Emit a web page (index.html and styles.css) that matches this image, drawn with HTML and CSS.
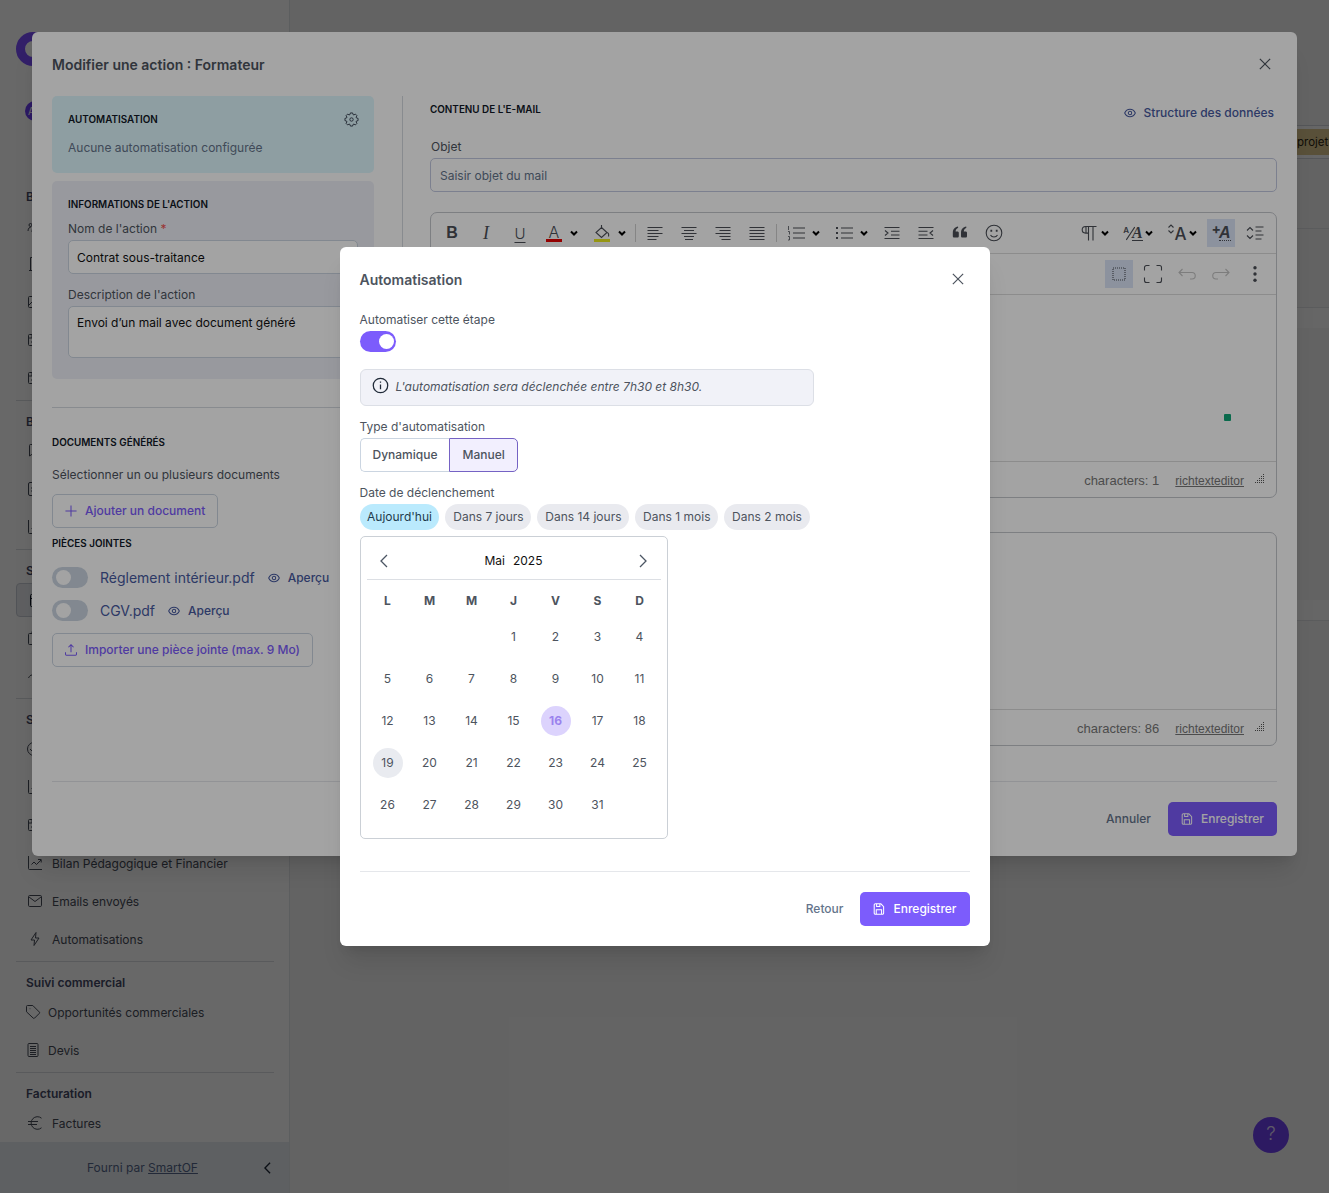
FILE: index.html
```html
<!DOCTYPE html>
<html lang="fr">
<head>
    <meta charset="UTF-8">
    <meta name="viewport" content="width=device-width, initial-scale=1.0">
    <title>Modifier une action</title>
    <link rel="stylesheet" href="styles.css">
</head>
<body>
    <!-- Shared icons -->
    <svg class="sprite" width="0" height="0">
        <symbol id="i-close" viewBox="0 0 14 14"><path d="M1 1l12 12M13 1L1 13"/></symbol>
        <symbol id="i-eye" viewBox="0 0 14 14"><path d="M.8 7c1.200-2.800 3.500-4.400 6.200-4.400s5 1.600 6.200 4.400c-1.200 2.800-3.500 4.400-6.200 4.400S2 9.800.8 7z"/><circle cx="7" cy="7" r="2"/></symbol>
        <symbol id="i-save" viewBox="0 0 14 14"><path d="M2.800 1h6.400l3.200 3.200v7.400a1.400 1.400 0 0 1-1.400 1.400H2.800a1.400 1.400 0 0 1-1.400-1.400V2.400A1.400 1.400 0 0 1 2.800 1zM3.800 12.800V8h6.200v4.800M4.200 1v3.200H8V1"/></symbol>
        <symbol id="i-gear" viewBox="0 0 16 16"><path d="M6.800 1.500h2.400l.4 1.700 1 .4 1.500-.9 1.700 1.700-.9 1.500.4 1 1.700.4v2.400l-1.700.4-.4 1 .9 1.500-1.700 1.700-1.500-.9-1 .4-.4 1.700h-2.400l-.4-1.700-1-.4-1.500.9-1.700-1.700.9-1.500-.4-1-1.700-.4v-2.400l1.700-.4.4-1-.9-1.500 1.700-1.700 1.500.9 1-.4z" transform="translate(0 -.5)"/><circle cx="8" cy="8" r="1.800"/></symbol>
        <symbol id="i-caret" viewBox="0 0 8 8"><path d="M1 2.500l3 3 3-3"/></symbol>
        <symbol id="i-left" viewBox="0 0 8 14"><path d="M7 1L1 7l6 6"/></symbol>
        <symbol id="i-right" viewBox="0 0 8 14"><path d="M1 1l6 6-6 6"/></symbol>
        <symbol id="i-chart" viewBox="0 0 16 16"><path d="M1.500 1v12.500a1 1 0 0 0 1 1h12.500M4.500 9.500l2.500-2.500 2.500 2.500 4.500-4.500M11 4.500h3.200v3"/></symbol>
        <symbol id="i-card" viewBox="0 0 16 16"><rect x="1.500" y="2.500" width="13" height="11" rx="1"/><path d="M1.500 6h13M5 3v3M4 10h4"/></symbol>
        <symbol id="i-doc" viewBox="0 0 16 16"><rect x="3.500" y="1.500" width="10" height="13" rx="1.500"/><path d="M6 5h5M6 8h5"/></symbol>
        <symbol id="i-grip" viewBox="0 0 10 10"><path d="M9.500 0v10M7.500 2v8M5.500 4v6M3.500 6v4M1.500 8v2" stroke-dasharray="1 1"/></symbol>
    </svg>

    <div class="app">
        <aside class="sidebar">
            <div class="brand"><div class="brand-logo"></div></div>
            <div class="account">A</div>
            <nav>
                <div class="nav-item nav-item-home"><svg class="icon"><use href="#i-doc"/></svg></div>
                <section class="nav-section">
                    <h2>B</h2>
                    <div class="nav-item"><svg class="icon" viewBox="0 0 16 16"><circle cx="8" cy="5" r="2.500"/><circle cx="3.500" cy="7" r="1.500"/><path d="M1 13c0-3 2-4 3-4M5 14c0-3 1-5 3-5s3 2 3 5"/></svg></div>
                    <div class="nav-item"><svg class="icon" viewBox="0 0 16 16"><path d="M2 14.500h12M3.500 14V1.500h9V14M6 5h1M6 8h1"/></svg></div>
                    <div class="nav-item"><svg class="icon" viewBox="0 0 16 16"><rect x="1.500" y="2.500" width="13" height="11" rx="1"/><path d="M2 11l4-4 3 3"/></svg></div>
                    <div class="nav-item"><svg class="icon"><use href="#i-card"/></svg></div>
                    <div class="nav-item"><svg class="icon"><use href="#i-card"/></svg></div>
                </section>
                <section class="nav-section">
                    <h2>B</h2>
                    <div class="nav-item"><svg class="icon" viewBox="0 0 16 16"><path d="M14 1.500H3.500a1 1 0 0 0-1 1V13l3-2H14z"/></svg></div>
                    <div class="nav-item"><svg class="icon" viewBox="0 0 16 16"><rect x="1.500" y="1.500" width="13" height="13" rx="1.500"/><path d="M4 7h3M4 10h3"/></svg></div>
                    <div class="nav-item"><svg class="icon"><use href="#i-chart"/></svg></div>
                </section>
                <section class="nav-section">
                    <h2>S</h2>
                    <div class="nav-item active"><svg class="icon" viewBox="0 0 16 16"><rect x="2.500" y="2.500" width="12" height="12" rx="1"/><path d="M2.500 6.500h12M5.500 1v3"/></svg></div>
                    <div class="nav-item"><svg class="icon" viewBox="0 0 16 16"><rect x="1.500" y="3.500" width="13" height="11" rx="1"/><path d="M5 3V1.500h6V3"/></svg></div>
                    <div class="nav-item"><svg class="icon" viewBox="0 0 16 16"><path d="M1.500 10c1-2 2-3 3.500-3s2 1 2 3"/></svg></div>
                </section>
                <section class="nav-section">
                    <h2>S</h2>
                    <div class="nav-item"><svg class="icon" viewBox="0 0 16 16"><circle cx="7" cy="8" r="6.500"/><path d="M3 8l3 3 4-5"/></svg></div>
                    <div class="nav-item"><svg class="icon"><use href="#i-chart"/></svg></div>
                    <div class="nav-item"><svg class="icon"><use href="#i-card"/></svg></div>
                    <div class="nav-item"><svg class="icon"><use href="#i-chart"/></svg>Bilan Pédagogique et Financier</div>
                    <div class="nav-item"><svg class="icon" viewBox="0 0 16 16"><rect x="1.500" y="2.500" width="13" height="11" rx="1.200"/><path d="M2 4l6 4.500L14 4"/></svg>Emails envoyés</div>
                    <div class="nav-item"><svg class="icon" viewBox="0 0 16 16"><path d="M9 1.500L4 9h3.500L7 14.500 12 7H8.500z"/></svg>Automatisations</div>
                </section>
                <section class="nav-section compact">
                    <h2>Suivi commercial</h2>
                    <div class="nav-item"><svg class="icon" viewBox="0 0 16 16"><path d="M1.500 2.500a1 1 0 0 1 1-1h5.300l6.500 6.500a1 1 0 0 1 0 1.400l-4.700 4.700a1 1 0 0 1-1.400 0L1.500 7.800z"/><path d="M4.700 4.700h.6"/></svg>Opportunités commerciales</div>
                    <div class="nav-item"><svg class="icon" viewBox="0 0 16 16"><rect x="3" y="1.500" width="10" height="13" rx="1"/><path d="M5 4.500h6M5 6.500h6M5 8.500h6M5 10.500h6M5 12.500h6"/></svg>Devis</div>
                </section>
                <section class="nav-section">
                    <h2>Facturation</h2>
                    <div class="nav-item"><svg class="icon" viewBox="0 0 16 16"><path d="M14.500 3.200A6.300 6.300 0 1 0 14.500 12.800M1 6.500h10M1 9.500h9"/></svg>Factures</div>
                </section>
            </nav>
            <footer class="sidebar-footer">
                <span>Fourni par <a>SmartOF</a></span>
                <svg class="collapse"><use href="#i-left"/></svg>
            </footer>
        </aside>
        <main class="content">
            <div class="tag-bar"><span class="tag">projet</span></div>
            <div class="band band-a"></div>
            <div class="band band-b"></div>
            <div class="band band-c"></div>
            <div class="band band-d"></div>
            <div class="band band-e"></div>
        </main>
        <button class="help">?</button>
    </div>

    <!-- Action dialog -->
    <div class="overlay overlay-top">
        <div class="dialog action-dialog">
            <header class="dialog-header">
                <h1>Modifier une action : Formateur</h1>
                <svg class="close"><use href="#i-close"/></svg>
            </header>
            <div class="action-body">
                <div class="action-side">
                    <div class="card card-auto">
                        <div class="card-head">
                            <h3>Automatisation</h3>
                            <svg class="gear"><use href="#i-gear"/></svg>
                        </div>
                        <p>Aucune automatisation configurée</p>
                    </div>
                    <div class="card card-info">
                        <h3>Informations de l'action</h3>
                        <label>Nom de l'action <span class="required">*</span></label>
                        <div class="input">Contrat sous-traitance</div>
                        <label>Description de l'action</label>
                        <div class="input textarea">Envoi d’un mail avec document généré</div>
                    </div>
                    <div class="documents">
                        <h3>Documents générés</h3>
                        <p>Sélectionner un ou plusieurs documents</p>
                        <button class="btn btn-outline"><svg class="btn-icon" viewBox="0 0 14 14"><path d="M7 .5v13M.5 7h13"/></svg>Ajouter un document</button>
                        <h3 class="attachments-title">Pièces jointes</h3>
                        <div class="attachment">
                            <span class="switch"></span>
                            <a class="file">Réglement intérieur.pdf</a>
                            <a class="preview"><svg class="btn-icon"><use href="#i-eye"/></svg>Aperçu</a>
                        </div>
                        <div class="attachment">
                            <span class="switch"></span>
                            <a class="file">CGV.pdf</a>
                            <a class="preview"><svg class="btn-icon"><use href="#i-eye"/></svg>Aperçu</a>
                        </div>
                        <button class="btn btn-outline"><svg class="btn-icon" viewBox="0 0 14 14"><path d="M7 9.500V.8M4 3.800l3-3 3 3M.6 9.500v2.600a1 1 0 0 0 1 1h10.800a1 1 0 0 0 1-1v-2.600"/></svg>Importer une pièce jointe (max. 9 Mo)</button>
                    </div>
                </div>
                <div class="action-mail">
                    <div class="mail-head">
                        <h3>Contenu de l'e-mail</h3>
                        <a class="preview"><svg class="btn-icon"><use href="#i-eye"/></svg>Structure des données</a>
                    </div>
                    <label>Objet</label>
                    <div class="input placeholder">Saisir objet du mail</div>

                    <div class="editor editor-main">
                        <div class="toolbar">
                            <span class="tool tool-bold">B</span>
                            <span class="tool tool-italic">I</span>
                            <span class="tool tool-underline">U</span>
                            <span class="tool tool-menu"><i class="glyph glyph-color">A</i><svg class="caret"><use href="#i-caret"/></svg></span>
                            <span class="tool tool-menu"><i class="glyph glyph-fill"><svg viewBox="0 0 16 14"><path d="M7.500 2.500l5.500 5-5.500 5-5.500-5zM7.500 0v4M13 7.500c1.500 0 2 2 1.500 4"/></svg></i><svg class="caret"><use href="#i-caret"/></svg></span>
                            <span class="tool-sep"></span>
                            <span class="tool"><svg viewBox="0 0 16 16"><path d="M.5 2.500h15M.5 5.500h11M.5 8.500h15M.5 11.500h11M.5 14.500h9"/></svg></span>
                            <span class="tool"><svg viewBox="0 0 16 16"><path d="M.5 2.500h15M3 5.500h10M.5 8.500h15M3 11.500h10M4 14.500h8"/></svg></span>
                            <span class="tool"><svg viewBox="0 0 16 16"><path d="M.5 2.500h15M4.500 5.500h11M.5 8.500h15M4.500 11.500h11M6.500 14.500h9"/></svg></span>
                            <span class="tool"><svg viewBox="0 0 16 16"><path d="M.5 2.500h15M.5 5.500h15M.5 8.500h15M.5 11.500h15M.5 14.500h15"/></svg></span>
                            <span class="tool-sep"></span>
                            <span class="tool tool-menu"><i class="glyph"><svg class="wide" viewBox="0 0 18 16"><path d="M6 3h12M6 8h12M6 13h12"/><path d="M1.500 1v4M1 6.500h1.500v3M1 11.500h1.500v3.500H1" stroke-width=".8"/></svg></i><svg class="caret"><use href="#i-caret"/></svg></span>
                            <span class="tool tool-menu"><i class="glyph"><svg class="wide" viewBox="0 0 18 16"><path d="M6 3h12M6 8h12M6 13h12"/><path d="M1 3h2M1 8h2M1 13h2" stroke-width="2"/></svg></i><svg class="caret"><use href="#i-caret"/></svg></span>
                            <span class="tool"><svg viewBox="0 0 16 16"><path d="M.5 2.500h15M7 6.200h8.500M7 10h8.500M.5 13.500h15M1 5.500l3 2.500-3 2.500"/></svg></span>
                            <span class="tool"><svg viewBox="0 0 16 16"><path d="M.5 2.500h15M.5 6.200h9M.5 10h9M.5 13.500h15M15 5.500l-3 2.500 3 2.500"/></svg></span>
                            <span class="tool"><svg class="filled" viewBox="0 0 16 16"><path d="M6 1.500C3 2 .8 4 .8 8v3c0 1 .5 1.500 1.500 1.500h3c1 0 1.500-.5 1.500-1.500V8c0-1-.5-1.500-1.500-1.500H3.600C3.700 4.800 4.500 3.500 6.200 2.800zM14.200 1.500C11.200 2 9 4 9 8v3c0 1 .5 1.500 1.500 1.500h3c1 0 1.500-.5 1.500-1.500V8c0-1-.5-1.500-1.500-1.500h-1.700c.1-1.700.9-3 2.600-3.700z"/></svg></span>
                            <span class="tool"><svg class="smile" viewBox="0 0 18 18"><circle cx="9" cy="9" r="7.800"/><path d="M5.500 11c1.500 2.600 5.500 2.600 7 0"/><path d="M6.300 5.800v2M11.700 5.800v2" stroke-width="1.800"/></svg></span>
                            <span class="tool-spacer"></span>
                            <span class="tool tool-menu tool-narrow"><i class="glyph"><svg viewBox="0 0 16 16"><path d="M15.500 1.500H4.500a3.300 3.300 0 0 0 0 6.600H7M5 1.500v6.600M7.500 1.500v14M12 1.500v14"/></svg></i><svg class="caret"><use href="#i-caret"/></svg></span>
                            <span class="tool tool-menu tool-narrow"><i class="glyph glyph-styles"><sup>A</sup><svg viewBox="0 0 8 14"><path d="M0 13L8 1"/></svg><b>A</b></i><svg class="caret"><use href="#i-caret"/></svg></span>
                            <span class="tool tool-menu tool-narrow"><i class="glyph glyph-size"><svg viewBox="0 0 8 10"><path d="M1.500 3.500L4 1l2.500 2.500M1.500 6.500L4 9l2.500-2.500"/></svg>A</i><svg class="caret"><use href="#i-caret"/></svg></span>
                            <span class="tool tool-active glyph-add"><sup>+</sup><b>A</b></span>
                            <span class="tool"><svg class="wide" viewBox="0 0 18 16"><path d="M1 5.500l3-3 3 3M1 10.500l3 3 3-3M9.500 2h8M9.500 6h6M9.500 10h8M9.500 14h6"/></svg></span>
                        </div>
                        <div class="toolbar toolbar-end">
                            <span class="tool tool-active"><svg viewBox="0 0 16 16"><rect x="2" y="2" width="12" height="12" stroke-dasharray="1 1"/></svg></span>
                            <span class="tool"><svg class="large" viewBox="0 0 20 20"><path d="M1.500 6.500v-3a2 2 0 0 1 2-2h3M13.500 1.500h3a2 2 0 0 1 2 2v3M18.500 13.500v3a2 2 0 0 1-2 2h-3M6.500 18.500h-3a2 2 0 0 1-2-2v-3"/></svg></span>
                            <span class="tool tool-disabled"><svg class="wide" viewBox="0 0 18 16"><path d="M4.500 3L1 6.500 4.500 10M1 6.500h13a2.800 2.800 0 0 1 0 6.500h-2"/></svg></span>
                            <span class="tool tool-disabled"><svg class="wide" viewBox="0 0 18 16"><path d="M13.500 3L17 6.500 13.500 10M17 6.500H4a2.800 2.800 0 0 0 0 6.500h2"/></svg></span>
                            <span class="tool"><svg class="filled" viewBox="0 0 16 16"><circle cx="8" cy="1.800" r="1.700"/><circle cx="8" cy="8" r="1.700"/><circle cx="8" cy="14.200" r="1.700"/></svg></span>
                        </div>
                        <div class="editor-body"><span class="marker"></span></div>
                        <div class="editor-footer"><span>characters: 1</span><a>richtexteditor</a><svg class="grip"><use href="#i-grip"/></svg></div>
                    </div>

                    <div class="editor editor-second">
                        <div class="editor-body"></div>
                        <div class="editor-footer"><span>characters: 86</span><a>richtexteditor</a><svg class="grip"><use href="#i-grip"/></svg></div>
                    </div>
                </div>
            </div>
            <footer class="dialog-footer">
                <button class="btn btn-text">Annuler</button>
                <button class="btn btn-primary"><svg class="btn-icon"><use href="#i-save"/></svg>Enregistrer</button>
            </footer>
        </div>
    </div>

    <!-- Automation dialog -->
    <div class="overlay">
        <div class="dialog auto-dialog">
            <header class="dialog-header">
                <h1>Automatisation</h1>
                <svg class="close"><use href="#i-close"/></svg>
            </header>
            <div class="auto-body">
                <label>Automatiser cette étape</label>
                <span class="switch on"></span>
                <div class="notice">
                    <svg viewBox="0 0 16 16"><circle cx="8" cy="8" r="6.800"/><path d="M8 7v4.500M8 4.200v1.300"/></svg>
                    <em>L'automatisation sera déclenchée entre 7h30 et 8h30.</em>
                </div>
                <label>Type d'automatisation</label>
                <div class="select-button">
                    <button>Dynamique</button>
                    <button class="selected">Manuel</button>
                </div>
                <label>Date de déclenchement</label>
                <div class="chips">
                    <span class="chip selected">Aujourd'hui</span>
                    <span class="chip">Dans 7 jours</span>
                    <span class="chip">Dans 14 jours</span>
                    <span class="chip">Dans 1 mois</span>
                    <span class="chip">Dans 2 mois</span>
                </div>
                <div class="calendar">
                    <div class="calendar-header">
                        <svg><use href="#i-left"/></svg>
                        <div class="calendar-title"><span>Mai</span><span>2025</span></div>
                        <svg><use href="#i-right"/></svg>
                    </div>
                    <div class="weekdays"><b>L</b><b>M</b><b>M</b><b>J</b><b>V</b><b>S</b><b>D</b></div>
                    <div class="days">
                        <span class="first">1</span><span>2</span><span>3</span><span>4</span>
                        <span>5</span><span>6</span><span>7</span><span>8</span><span>9</span><span>10</span><span>11</span>
                        <span>12</span><span>13</span><span>14</span><span>15</span><span class="picked">16</span><span>17</span><span>18</span>
                        <span class="today">19</span><span>20</span><span>21</span><span>22</span><span>23</span><span>24</span><span>25</span>
                        <span>26</span><span>27</span><span>28</span><span>29</span><span>30</span><span>31</span>
                    </div>
                </div>
            </div>
            <footer class="dialog-footer">
                <button class="btn btn-text">Retour</button>
                <button class="btn btn-primary"><svg class="btn-icon"><use href="#i-save"/></svg>Enregistrer</button>
            </footer>
        </div>
    </div>
</body>
</html>
```

FILE: styles.css
```css
* {
    box-sizing: border-box;
}

body {
    margin: 0;
    height: 1193px;
    overflow: hidden;
    font-family: Inter, "Liberation Sans", sans-serif;
    font-size: 12px;
    color: #4d545e;
}

h1, h2, h3, p {
    margin: 0;
}

button {
    font: inherit;
    color: inherit;
}

svg {
    display: block;
    flex: none;
    fill: none;
    stroke: currentColor;
}

.sprite {
    position: absolute;
}

/* Application behind the dialogs */
.app {
    display: flex;
    height: 1193px;
    background-color: #f5f5f5;
}

.sidebar {
    display: flex;
    flex-direction: column;
    width: 290px;
    height: 1193px;
    background-color: #fff;
    border-right: 1px solid #e3e6ea;
}

.brand {
    padding: 32px 16px 0;
}

.brand-logo {
    width: 34px;
    height: 34px;
    border: 9px solid #7c4dff;
    border-radius: 50%;
}

.account {
    display: flex;
    align-items: center;
    width: 20px;
    height: 20px;
    margin: 35px 0 0 25px;
    padding-left: 3px;
    border-radius: 50%;
    background-color: #6d3df5;
    color: #fff;
    font-size: 10px;
}

nav {
    flex: 1;
    padding: 7px 15px 0 16px;
    overflow: hidden;
}

.nav-section {
    padding: 9px 0 3px;
    border-bottom: 1px solid #dadde2;
}

.nav-section h2 {
    height: 22px;
    padding-left: 10px;
    line-height: 23px;
    font-size: 12px;
    font-weight: 600;
    color: #444864;
}

.nav-item {
    display: flex;
    align-items: center;
    gap: 9px;
    height: 38px;
    padding-left: 11px;
    color: #464c58;
    white-space: nowrap;
}

.nav-item-home {
    padding-left: 13px;
    margin-bottom: 10px;
}

.nav-item.active {
    height: 34px;
    margin: 2px 0;
    border: 1px solid #c9ced6;
    border-radius: 4px;
    background-color: #e9ebf0;
    color: #111827;
}

.compact .nav-item {
    gap: 7px;
    padding-left: 9px;
}

.icon {
    width: 16px;
    height: 16px;
}

.sidebar-footer {
    display: flex;
    align-items: center;
    justify-content: space-between;
    height: 51px;
    padding: 0 18px 0 87px;
    background-color: #e6ecf0;
    color: #55678a;
}

.sidebar-footer a {
    text-decoration: underline;
}

.collapse {
    width: 7px;
    height: 12px;
    stroke-width: 1.6;
    color: #1f2937;
}

.content {
    flex: 1;
    padding-top: 125px;
}

.tag-bar {
    display: flex;
    justify-content: flex-end;
    height: 34px;
    padding: 3px 0;
    border-top: 1px solid #d0d4d9;
    border-bottom: 1px solid #d0d4d9;
    background-color: #fafafa;
}

.tag {
    width: 44px;
    padding-left: 12px;
    line-height: 26px;
    font-size: 11.5px;
    background-color: #dcc68e;
    color: #2b2410;
}

.band {
    border-bottom: 1px solid #e0e2e5;
}

.band-a {
    height: 70px;
}

.band-b {
    height: 79px;
}

.band-c {
    height: 20px;
    border: 0;
    background-color: #fafafa;
}

.band-d {
    height: 272px;
    border: 0;
}

.band-e {
    height: 21px;
    background-color: #fafafa;
}

.help {
    position: absolute;
    right: 40px;
    bottom: 40px;
    width: 36px;
    height: 36px;
    padding: 0 0 4px;
    border: 0;
    border-radius: 50%;
    background-color: #7040f0;
    color: #e4dcff;
    font-size: 19px;
    font-weight: 300;
}

/* Dialogs */
.overlay {
    position: absolute;
    inset: 0;
    display: flex;
    align-items: center;
    justify-content: center;
    background-color: rgba(0, 0, 0, 0.36);
}

.overlay-top {
    align-items: flex-start;
    padding-top: 32px;
}

.dialog {
    display: flex;
    flex-direction: column;
    padding: 20px;
    border-radius: 6px;
    background-color: #fff;
    box-shadow: 0 20px 25px -5px rgba(0, 0, 0, 0.1), 0 8px 10px -6px rgba(0, 0, 0, 0.1);
}

.dialog-header {
    display: flex;
    align-items: flex-start;
    justify-content: space-between;
    height: 44px;
}

.dialog-header h1 {
    line-height: 26px;
    font-size: 14px;
    font-weight: 600;
}

.close {
    width: 12px;
    height: 12px;
    margin: 6px 6px 0 0;
    stroke-width: 1.4;
}

.dialog-footer {
    display: flex;
    justify-content: flex-end;
    gap: 4px;
    padding-top: 20px;
    border-top: 1px solid #e5e7eb;
}

.btn {
    display: inline-flex;
    align-items: center;
    gap: 8px;
    height: 34px;
    padding: 0 12px 1px;
    border: 1px solid transparent;
    border-radius: 5px;
    background: none;
    font-weight: 500;
    white-space: nowrap;
}

.btn-icon {
    width: 12px;
    height: 12px;
    stroke-width: 1.2;
}

.btn-primary {
    background-color: #7c5cfc;
    color: #fff;
}

.btn-text {
    color: #64748b;
}

.btn-outline {
    border-color: #cbd5e1;
    color: #7c5cfc;
}

label {
    display: block;
    height: 16px;
    line-height: 16px;
}

.switch {
    display: block;
    flex: none;
    width: 36px;
    height: 21px;
    padding: 3px;
    border-radius: 11px;
    background-color: #cbd5e1;
}

.switch::before {
    content: "";
    display: block;
    width: 15px;
    height: 15px;
    margin-left: 1px;
    border-radius: 50%;
    background-color: #fff;
}

.switch.on {
    background-color: #7c5cfc;
}

.switch.on::before {
    margin-left: 16px;
}

.input {
    height: 34px;
    padding: 0 8px;
    border: 1px solid #cbd5e1;
    border-radius: 5px;
    background-color: #fff;
    line-height: 33px;
    color: #111;
}

/* Action dialog */
.action-dialog {
    width: 1265px;
    height: 824px;
}

.action-body {
    display: flex;
    height: 685px;
}

.action-side {
    width: 351px;
    padding-right: 28px;
    border-right: 1px solid #d5d9e0;
}

h3 {
    font-size: 9.9px;
    font-weight: 600;
    line-height: 14px;
    text-transform: uppercase;
    color: #111827;
}

.card {
    padding: 16px;
    border-radius: 5px;
}

.card-auto {
    height: 77px;
    margin-bottom: 8px;
    background-color: #dff7fd;
}

.card-auto p {
    margin-top: 13px;
    line-height: 16px;
    color: #64748b;
}

.card-head {
    display: flex;
    align-items: center;
    justify-content: space-between;
    height: 15px;
}

.card-head h3 {
    padding-bottom: 1px;
}

.gear {
    width: 15px;
    height: 15px;
    margin-right: -1px;
    color: #374151;
}

.card-info {
    height: 198px;
    background-color: #eef0f7;
}

.card-info h3 {
    margin-bottom: 10px;
}

.card-info label {
    margin-bottom: 3px;
}

.card-info .input + label {
    margin-top: 13px;
}

.card-info .textarea {
    height: 52px;
    line-height: 32px;
}

.required {
    color: #f05252;
}

.documents {
    margin-top: 28px;
    padding-top: 27px;
    border-top: 1px solid #d5d9e0;
}

.documents p {
    margin: 18px 0 11px;
    line-height: 16px;
}

.documents .attachments-title {
    margin: 8px 0 17px;
}

.attachment {
    display: flex;
    align-items: center;
    height: 21px;
    margin-bottom: 12px;
}

.file {
    margin: 0 13px 0 12px;
    font-size: 14px;
    color: #475aa0;
}

.preview {
    display: flex;
    align-items: center;
    gap: 8px;
    font-weight: 500;
    color: #475aa0;
}

.action-mail {
    flex: 1;
    padding-left: 27px;
}

.mail-head {
    display: flex;
    justify-content: space-between;
    height: 43px;
    padding: 6px 3px 0 0;
}

.mail-head .preview {
    height: 21px;
}

.action-mail label {
    margin-bottom: 3px;
    padding-left: 1px;
}

.action-mail .input {
    border-color: #c3c9e0;
}

.action-mail .placeholder {
    padding-left: 9px;
    color: #64748b;
}

.editor {
    display: flex;
    flex-direction: column;
    border: 1px solid #c4c7cc;
    border-radius: 7px;
}

.editor-main {
    height: 286px;
    margin-top: 20px;
}

.editor-second {
    height: 214px;
    margin-top: 34px;
}

.toolbar {
    display: flex;
    align-items: center;
    gap: 6px;
    height: 41px;
    padding: 0 7px;
    border-bottom: 1px solid #dcdcdc;
    color: #4b4f57;
}

.toolbar-end {
    justify-content: flex-end;
}

.tool {
    display: flex;
    flex: none;
    align-items: center;
    justify-content: center;
    width: 28px;
    height: 28px;
}

.tool svg {
    width: 16px;
    height: 16px;
    stroke-width: 1.1;
}

.tool svg.filled {
    fill: currentColor;
    stroke: none;
}

.tool svg.smile,
.tool svg.wide {
    width: 18px;
}

.tool svg.smile {
    height: 18px;
}

.tool svg.large {
    width: 20px;
    height: 20px;
}

.tool-bold {
    font-family: "Liberation Sans", Arial, sans-serif;
    font-size: 16px;
    font-weight: 700;
}

.tool-italic {
    font-family: "Liberation Serif", serif;
    font-size: 18px;
    font-style: italic;
}

.tool-underline {
    font-size: 15px;
    font-weight: 300;
    text-decoration: underline;
    text-underline-offset: 3px;
}

.tool-menu {
    justify-content: flex-start;
    width: 42px;
}

.tool-narrow {
    width: 38px;
}

.tool .caret {
    width: 8px;
    height: 8px;
    margin-left: 2px;
    stroke-width: 2;
    color: #000;
}

.tool-narrow .caret {
    margin-left: -2px;
}

.glyph {
    display: flex;
    flex: none;
    align-items: center;
    justify-content: center;
    width: 28px;
    font-style: normal;
}

.glyph-color,
.glyph-fill {
    width: 16px;
    height: 18px;
    margin: 0 6px;
    border-bottom: 3px solid #e60000;
    font-size: 16px;
    font-weight: 300;
}

.glyph-fill {
    border-color: #ebeb1e;
}

.tool .glyph-fill svg {
    height: 14px;
}

.glyph-styles sup {
    align-self: flex-start;
    margin: 0 -3px 6px 0;
    font-size: 8px;
    font-weight: 600;
}

.tool .glyph-styles svg {
    width: 9px;
    height: 15px;
}

.glyph-styles b,
.glyph-add b {
    margin-left: -3px;
    font-family: "Liberation Serif", serif;
    font-size: 16px;
    font-style: italic;
    line-height: 15px;
    border-bottom: 1px solid currentColor;
}

.glyph-size {
    padding-top: 2px;
    font-size: 17px;
    font-weight: 500;
}

.tool .glyph-size svg {
    width: 8px;
    height: 10px;
    margin: 0 -1px 10px 0;
}

.glyph-add sup {
    margin: 0 1px 8px 0;
    font-size: 14px;
    font-weight: 700;
    line-height: 10px;
}

.glyph-add b {
    font-family: "Liberation Sans", Arial, sans-serif;
    border-bottom: 1px dotted currentColor;
}

.tool-sep {
    width: 1px;
    height: 18px;
    margin: 0 -1px;
    background-color: #d0d0d0;
}

.tool-spacer {
    flex: 1;
}

.tool-active {
    background-color: #dbe4f8;
}

.tool-disabled {
    color: #c4c4c4;
}

.editor-body {
    flex: 1;
}

/* Extension marker at the end of the text area */
.marker {
    display: block;
    width: 7px;
    height: 7px;
    margin: 119px 45px 0 auto;
    border-radius: 1px;
    background-color: #10a777;
}

.editor-footer {
    display: flex;
    align-items: center;
    justify-content: flex-end;
    height: 36px;
    padding: 2px 12px 0 0;
    border-top: 1px solid #dcdcdc;
    font-family: "Liberation Sans", Arial, sans-serif;
    font-size: 13px;
    color: #777;
}

.editor-footer a {
    margin: 0 10px 0 16px;
    font-size: 12px;
    text-decoration: underline;
}

.grip {
    width: 10px;
    height: 10px;
    margin-bottom: 3px;
    color: #555;
}

/* Automation dialog */
.auto-dialog {
    width: 650px;
    height: 699px;
}

.auto-body {
    height: 560px;
    padding-top: 1px;
}

.auto-body .switch {
    margin: 3px 0 17px;
}

.notice {
    display: flex;
    gap: 8px;
    width: 454px;
    height: 37px;
    margin-bottom: 13px;
    padding: 7px 11px;
    border: 1px solid #dcdfe6;
    border-radius: 6px;
    background-color: #f1f2f8;
    line-height: 20px;
}

.notice svg {
    width: 17px;
    height: 17px;
    margin-right: -1px;
    stroke-width: 1.2;
    color: #1f2937;
}

.select-button {
    display: flex;
    margin: 3px 0 13px;
}

.select-button button {
    height: 34px;
    padding: 0 12px 1px;
    border: 1px solid #cbd5e1;
    border-right: 0;
    border-radius: 5px 0 0 5px;
    background-color: #fff;
    font-weight: 500;
}

.select-button .selected {
    border: 1px solid #7562c4;
    border-radius: 0 5px 5px 0;
    background-color: #f2effe;
}

.chips {
    display: flex;
    gap: 6px;
    margin: 3px 0 6px;
}

.chip {
    height: 26px;
    padding: 0 7.8px;
    border-radius: 13px;
    background-color: #e9eaef;
    line-height: 26px;
    white-space: nowrap;
}

.chip.selected {
    padding: 0 7.5px;
    background-color: #baeafd;
    color: #1e3a4c;
}

.calendar {
    width: 308px;
    height: 303px;
    padding: 6px;
    border: 1px solid #cbd0d6;
    border-radius: 5px;
}

.calendar-header {
    display: flex;
    align-items: center;
    justify-content: space-between;
    height: 37px;
    padding: 0 14px 0 13px;
    border-bottom: 1px solid #dcdfe4;
}

.calendar-header svg {
    width: 8px;
    height: 14px;
    stroke-width: 1.3;
    color: #4b5563;
}

.calendar-title {
    display: flex;
    gap: 8px;
    padding: 0 0 1px 1px;
    color: #111;
}

.weekdays,
.days {
    display: grid;
    grid-template-columns: repeat(7, 42px);
    text-align: center;
}

.weekdays {
    margin-top: 6px;
    line-height: 30px;
}

.days {
    grid-auto-rows: 30px;
    row-gap: 12px;
    padding-top: 6px;
    line-height: 30px;
}

.days .first {
    grid-column-start: 4;
}

.days span {
    width: 30px;
    margin: 0 6px;
    border-radius: 50%;
}

.days .picked {
    background-color: #dcd3fd;
    color: #9b82ee;
    font-weight: 700;
}

.days .today {
    background-color: #e9ebf0;
}
```
